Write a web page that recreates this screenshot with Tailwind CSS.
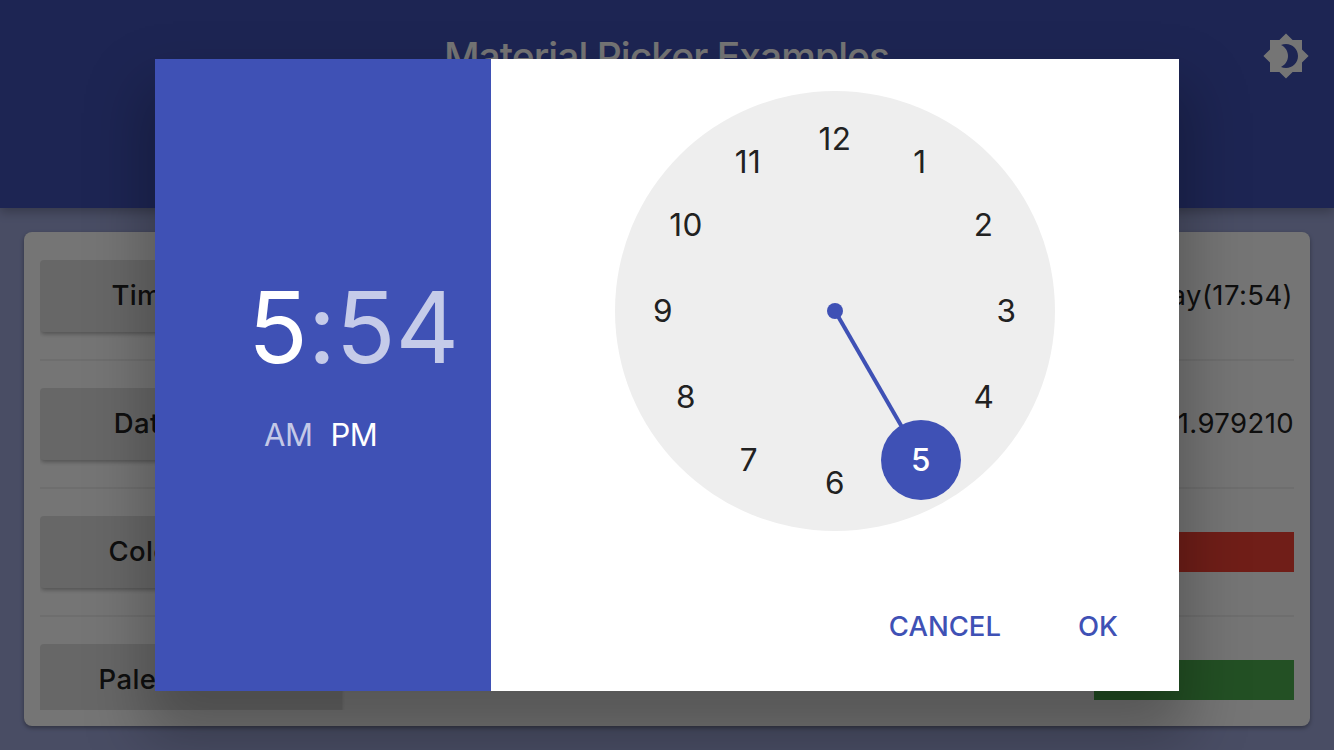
<!DOCTYPE html>
<html lang="en">
<head>
<meta charset="utf-8">
<title>Material Picker Examples</title>
<script src="https://cdn.jsdelivr.net/npm/@tailwindcss/browser@4"></script>
</head>
<body class="relative w-[1334px] h-[750px] overflow-hidden bg-[#9fa8da] font-['Inter','Liberation_Sans',sans-serif] text-[#212121]">
<div class="flex h-full flex-col">
  <header class="relative flex h-[208px] shrink-0 items-start justify-center bg-[#3f51b5] shadow-[0_4px_10px_rgba(0,0,0,0.25)]">
    <h1 class="pt-8 pr-px text-[39px] leading-[49px] font-[550] tracking-[-0.95px] text-white whitespace-nowrap">Material Picker Examples</h1>
    <svg class="absolute top-8 right-6 size-12 fill-white" viewBox="0 0 24 24"><path d="M20 8.69V4h-4.69L12 .69 8.69 4H4v4.69L.69 12 4 15.31V20h4.69L12 23.31 15.31 20H20v-4.69L23.31 12 20 8.69zM12 18c-.89 0-1.74-.2-2.5-.55C11.56 16.5 13 14.42 13 12s-1.44-4.5-3.5-5.45C10.26 6.2 11.11 6 12 6c3.31 0 6 2.69 6 6s-2.69 6-6 6z"/></svg>
  </header>
  <main class="m-6 h-[494px] rounded-lg bg-white p-4 shadow-[0_2px_4px_rgba(0,0,0,0.35)]">
    <div class="h-[462px] overflow-hidden pt-3 text-[27.5px]">
      <div class="flex h-[72px] items-center justify-between">
        <button class="h-[72px] w-[302px] rounded bg-[#e0e0e0] font-medium tracking-[0.4px] shadow-[0_3px_4px_-1px_rgba(0,0,0,0.3)]">Time Picker</button>
        <span class="pr-px tracking-[0.4px]">TimeOfDay(17:54)</span>
      </div>
      <hr class="my-[27px] h-[2px] border-0 bg-[#f0f0f0]">
      <div class="flex h-[72px] items-center justify-between">
        <button class="h-[72px] w-[302px] rounded bg-[#e0e0e0] font-medium tracking-[0.4px] shadow-[0_3px_4px_-1px_rgba(0,0,0,0.3)]">Date Picker</button>
        <span class="tracking-[0.4px]">2019-08-18 17:54:21.979210</span>
      </div>
      <hr class="my-[27px] h-[2px] border-0 bg-[#f0f0f0]">
      <div class="flex h-[72px] items-center justify-between">
        <button class="h-[72px] w-[302px] rounded bg-[#e0e0e0] font-medium tracking-[0.4px] shadow-[0_3px_4px_-1px_rgba(0,0,0,0.3)]">Color Picker</button>
        <div class="h-10 w-[200px] bg-[#f44336]"></div>
      </div>
      <hr class="my-[27px] h-[2px] border-0 bg-[#f0f0f0]">
      <div class="flex h-[72px] items-center justify-between">
        <button class="h-[72px] w-[302px] rounded bg-[#e0e0e0] font-medium tracking-[0.4px] shadow-[0_3px_4px_-1px_rgba(0,0,0,0.3)]">Palette Picker</button>
        <div class="h-10 w-[200px] bg-[#4caf50]"></div>
      </div>
    </div>
  </main>
</div>

<div class="absolute inset-0 flex items-center justify-center bg-black/54">
  <section class="flex h-[632px] w-[1024px] bg-white shadow-[0_36px_56px_10px_rgba(0,0,0,0.26)]">
    <div class="flex w-[336px] flex-col bg-[#3f51b5] text-white/70 whitespace-nowrap">
      <div class="mt-[209px] ml-[93px] text-[98.5px] leading-[120px] tracking-[-0.2px] [font-feature-settings:'calt'_0]"><span class="text-white">5</span>:54</div>
      <div class="mt-[27px] ml-[109px] flex gap-[18px] text-[31px] leading-[40px] tracking-[-0.5px]"><span>AM</span><span class="text-white">PM</span></div>
    </div>
    <div class="flex flex-1 flex-col items-center pt-8">
      <svg class="size-[440px]" viewBox="-220 -220 440 440" text-anchor="middle" font-size="31.5" fill="#212121">
        <circle r="220" fill="#eeeeee"/>
        <g fill="#3f51b5"><circle r="8"/><path d="M0 0L86 149" stroke="#3f51b5" stroke-width="4"/><circle cx="86" cy="149" r="40"/></g>
        <g class="tracking-[0.5px]"><text x="0" y="-161">12</text><text x="85" y="-138">1</text><text x="148.5" y="-75">2</text><text x="171.5" y="11">3</text><text x="149" y="97">4</text><text x="86" y="160" fill="#fff" class="font-medium">5</text><text x="0" y="183">6</text><text x="-86" y="160">7</text><text x="-149" y="97">8</text><text x="-172" y="11">9</text><text x="-149" y="-75">10</text><text x="-87" y="-138">11</text></g>
      </svg>
      <div class="mt-[71px] flex w-full justify-end gap-[77px] pr-[61px] text-[27.5px] leading-[48px] font-[480] text-[#3f51b5]"><button>CANCEL</button><button>OK</button></div>
    </div>
  </section>
</div>
</body>
</html>
